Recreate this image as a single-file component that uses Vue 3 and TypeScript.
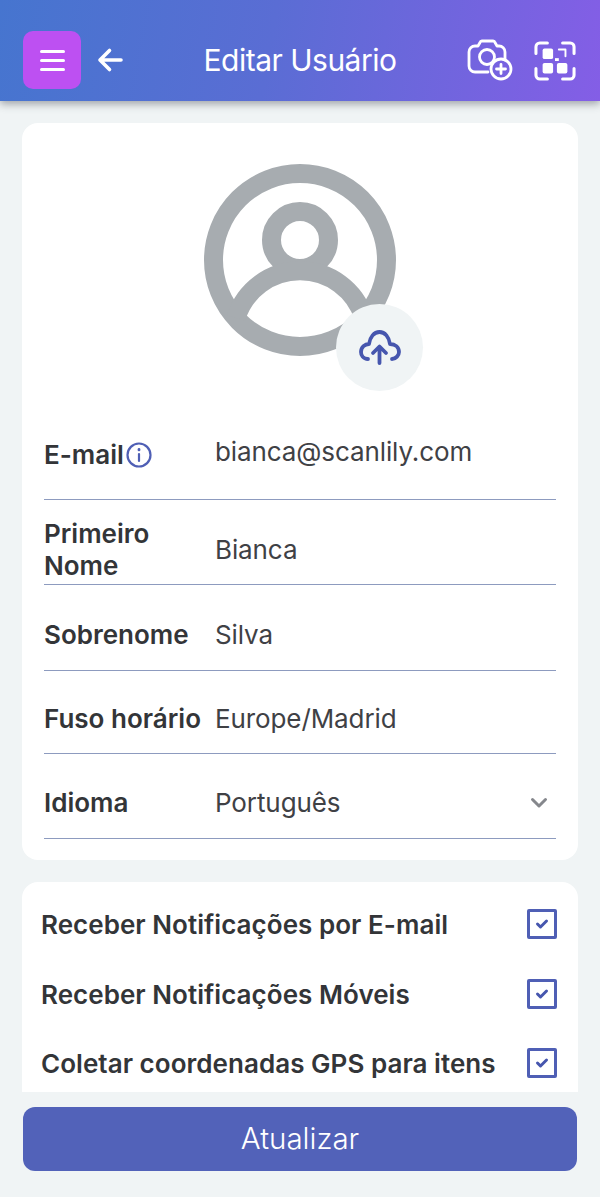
<script setup lang="ts">
interface Field {
  key: string
  label: string
  value: string
  select?: boolean
  info?: boolean
}
const fields: Field[] = [
  { key: 'email', label: 'E-mail', value: 'bianca@scanlily.com', info: true },
  { key: 'first', label: 'Primeiro Nome', value: 'Bianca' },
  { key: 'last', label: 'Sobrenome', value: 'Silva' },
  { key: 'tz', label: 'Fuso horário', value: 'Europe/Madrid' },
  { key: 'lang', label: 'Idioma', value: 'Português', select: true },
]
const options: string[] = [
  'Receber Notificações por E-mail',
  'Receber Notificações Móveis',
  'Coletar coordenadas GPS para itens',
]
</script>

<template>
  <div class="page">
    <header class="topbar">
      <button class="menu" aria-label="Menu">
        <span></span><span></span><span></span>
      </button>
      <svg class="back" width="26" height="26" viewBox="0 0 26 26" fill="none" stroke="#fff" stroke-width="3.6" stroke-linecap="round" stroke-linejoin="round">
        <path d="M24 13H3M12.5 3.5L3 13l9.5 9.5" />
      </svg>
      <h1 class="title">Editar Usuário</h1>
      <svg class="cam" width="46" height="42" viewBox="0 0 46 42" fill="none" stroke="#fff" stroke-width="2.8" stroke-linecap="round" stroke-linejoin="round">
        <path d="M21 33H8a6 6 0 0 1-6-6V13a6 6 0 0 1 6-6h3l2-3.500A2 2 0 0 1 15 2h11a2 2 0 0 1 2 1.500L30 7h2a6 6 0 0 1 6 6v8" />
        <circle cx="20" cy="18" r="7.500" />
        <circle cx="34" cy="30" r="10" />
        <path d="M34 25.500v9M29.500 30h9" />
      </svg>
      <svg class="scan" width="42" height="40" viewBox="0 0 44 42">
        <g fill="none" stroke="#fff" stroke-width="3.2" stroke-linecap="round" stroke-linejoin="round">
          <path d="M2 13V6a4 4 0 0 1 4-4h8M30 2h8a4 4 0 0 1 4 4v7M42 29v7a4 4 0 0 1-4 4h-8M14 40H6a4 4 0 0 1-4-4v-7" />
          <path d="M26 9h7v7" stroke-width="2" />
        </g>
        <g fill="#fff">
          <rect x="9" y="8" width="11" height="11" rx="2" />
          <rect x="9" y="23" width="11" height="11" rx="2" />
          <rect x="24" y="23" width="11" height="11" rx="2" />
          <rect x="22" y="18" width="4" height="3" />
        </g>
      </svg>
    </header>

    <main class="content">
      <section class="card profile">
        <div class="avatar">
          <svg width="194" height="194" viewBox="0 0 194 194" fill="none" stroke="#a7acb0" stroke-width="19">
            <circle cx="97" cy="97" r="86.500" />
            <circle cx="97" cy="77" r="28.500" />
            <path d="M33 155A67 67 0 0 1 161 155" />
          </svg>
          <span class="upload">
            <svg width="44" height="40" viewBox="0 0 44 40" fill="none" stroke="#4656ae" stroke-width="3.800" stroke-linecap="round" stroke-linejoin="round">
              <path d="M10 31C5 31 3 27 3 24C3 19 7 16 11 16C12 9 16 4 21.500 4C27 4 31 9 32 16C37 16 41 19 41 24C41 27 38 31 34 31" />
              <path d="M21.500 35V19M15 25l6.500-6.500L28 25" />
            </svg>
          </span>
        </div>

        <div v-for="f in fields" :key="f.key" class="row" :class="'row-' + f.key">
          <label class="label">
            {{ f.label }}
            <svg v-if="f.info" class="info" width="26" height="26" viewBox="0 0 26 26" fill="none" stroke="#4f5fb5" stroke-width="2.200" stroke-linecap="round">
              <circle cx="13" cy="13" r="11.500" />
              <path d="M13 12v7" />
              <path d="M13 7.500v.4" stroke-width="2.800" />
            </svg>
          </label>
          <span class="value">{{ f.value }}</span>
          <svg v-if="f.select" class="chev" width="18" height="12" viewBox="0 0 18 12" fill="none" stroke="#85878c" stroke-width="3" stroke-linecap="round" stroke-linejoin="round">
            <path d="M2.500 2.500L9 9l6.500-6.500" />
          </svg>
        </div>
      </section>

      <section class="card checks">
        <div v-for="o in options" :key="o" class="check-row">
          <span class="check-label">{{ o }}</span>
          <span class="box">
            <svg width="14" height="12" viewBox="0 0 14 12" fill="none" stroke="#4656ae" stroke-width="3" stroke-linecap="round" stroke-linejoin="round">
              <path d="M2.500 6L5.500 9L11.500 3" />
            </svg>
          </span>
        </div>
      </section>
    </main>

    <footer class="foot">
      <button class="submit">Atualizar</button>
    </footer>
  </div>
</template>

<style>
html, body { margin: 0; background: #f0f4f5; }
</style>

<style scoped>
.page {
  width: 600px;
  height: 1197px;
  display: flex;
  flex-direction: column;
  background: #f0f4f5;
  font-family: Inter, "Liberation Sans", sans-serif;
  color: #333538;
  overflow: hidden;
}
.topbar {
  position: relative;
  z-index: 2;
  flex: 0 0 101px;
  box-sizing: border-box;
  display: flex;
  align-items: flex-start;
  padding: 31px 24px 0 23px;
  background: linear-gradient(100deg, #4675cf 0%, #5a6dd4 45%, #845ee6 100%);
  box-shadow: 0 3px 8px rgba(60, 65, 75, 0.45);
}
.menu {
  width: 58px;
  height: 58px;
  border: 0;
  padding: 0;
  border-radius: 10px;
  background: #bd50f2;
  display: flex;
  flex-direction: column;
  align-items: center;
  justify-content: center;
  gap: 6px;
}
.menu span {
  width: 25px;
  height: 3px;
  border-radius: 2px;
  background: #fff;
}
.back { margin: 16px 0 0 16px; }
.title {
  flex: 1;
  margin: 9px 0 0;
  height: 40px;
  text-align: center;
  font-size: 30px;
  line-height: 40px;
  font-weight: 400;
  letter-spacing: -0.5px;
  color: #fff;
  white-space: nowrap;
  padding-left: 10px;
}
.cam { margin: 8px 0 0; }
.scan { margin: 10px 0 0 21px; }
.content {
  flex: 1;
  min-height: 0;
  overflow: hidden;
  padding: 22px 22px 0;
  display: flex;
  flex-direction: column;
  gap: 22px;
}
.card {
  background: #fff;
  border-radius: 16px;
  flex-shrink: 0;
}
.profile {
  height: 737px;
  box-sizing: border-box;
  padding: 40px 22px 0;
}
.avatar {
  position: relative;
  width: 194px;
  height: 194px;
  margin: 0 auto;
}
.avatar > svg { display: block; }
.upload {
  position: absolute;
  left: 133px;
  top: 141px;
  width: 87px;
  height: 87px;
  border-radius: 50%;
  background: #f0f4f5;
  display: flex;
  align-items: center;
  justify-content: center;
}
.row {
  display: flex;
  align-items: center;
  border-bottom: 1px solid #8d9bbf;
  box-sizing: border-box;
}
.row-email { height: 143px; padding-top: 53px; }
.row-first { height: 85px; padding-top: 15px; }
.row-last { height: 86px; padding-top: 14px; }
.row-tz { height: 83px; padding-top: 13px; }
.row-lang { height: 85px; padding-top: 13px; }
.label {
  flex: 0 0 171px;
  display: flex;
  flex-wrap: wrap;
  align-items: center;
  gap: 2px;
  font-size: 26px;
  line-height: 32px;
  font-weight: 600;
  white-space: nowrap;
}
.row-first .label { white-space: normal; padding-right: 40px; box-sizing: border-box; }
.info { margin-top: 1px; }
.value {
  flex: 1;
  font-size: 26px;
  line-height: 32px;
  font-weight: 400;
  letter-spacing: -0.1px;
  color: #3f4145;
}
.row-email .value { margin-top: -6px; }
.chev { margin-right: 8px; }
.checks {
  padding: 8px 21px 0 19px;
  height: 240px;
}
.check-row {
  height: 69.500px;
  display: flex;
  align-items: center;
  justify-content: space-between;
}
.check-label {
  font-size: 26px;
  font-weight: 600;
  letter-spacing: 0.04px;
  white-space: nowrap;
}
.box {
  box-sizing: border-box;
  width: 30px;
  height: 30px;
  margin-top: -1px;
  border: 3px solid #4f5fb5;
  border-radius: 2px;
  display: flex;
  align-items: center;
  justify-content: center;
}
.foot {
  position: relative;
  z-index: 1;
  flex: 0 0 105px;
  box-sizing: border-box;
  padding: 15px 23px 0;
  background: #f0f4f5;
}
.submit {
  display: block;
  width: 100%;
  height: 64px;
  padding: 0 0 2px;
  border: 0;
  border-radius: 12px;
  background: #5262b9;
  color: #fff;
  font-family: inherit;
  font-size: 29.500px;
  font-weight: 300;
}
</style>
